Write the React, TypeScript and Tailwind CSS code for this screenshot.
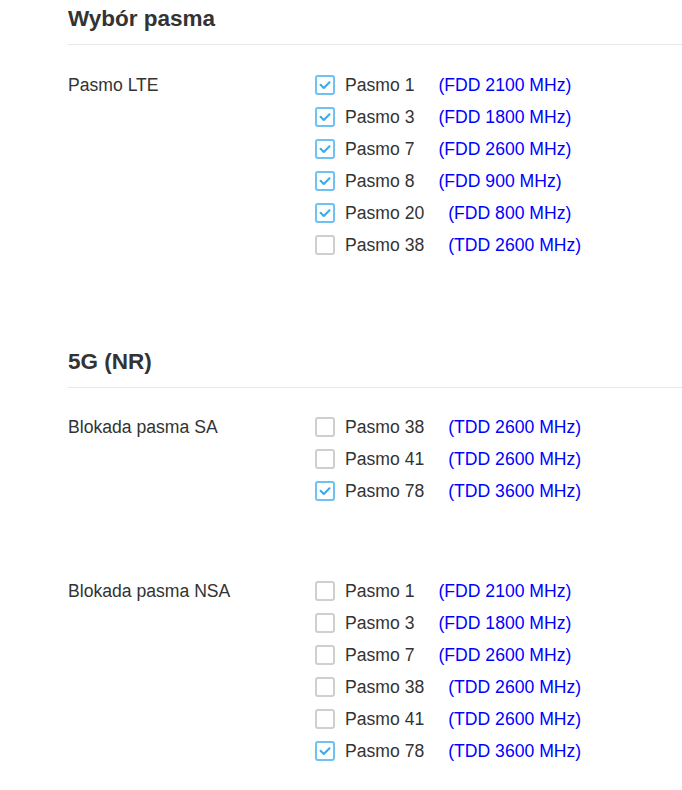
type Band = { name: string; freq: string; on: boolean };

const lte: Band[] = [
  { name: 'Pasmo 1', freq: '(FDD 2100 MHz)', on: true },
  { name: 'Pasmo 3', freq: '(FDD 1800 MHz)', on: true },
  { name: 'Pasmo 7', freq: '(FDD 2600 MHz)', on: true },
  { name: 'Pasmo 8', freq: '(FDD 900 MHz)', on: true },
  { name: 'Pasmo 20', freq: '(FDD 800 MHz)', on: true },
  { name: 'Pasmo 38', freq: '(TDD 2600 MHz)', on: false },
];

const sa: Band[] = [
  { name: 'Pasmo 38', freq: '(TDD 2600 MHz)', on: false },
  { name: 'Pasmo 41', freq: '(TDD 2600 MHz)', on: false },
  { name: 'Pasmo 78', freq: '(TDD 3600 MHz)', on: true },
];

const nsa: Band[] = [
  { name: 'Pasmo 1', freq: '(FDD 2100 MHz)', on: false },
  { name: 'Pasmo 3', freq: '(FDD 1800 MHz)', on: false },
  { name: 'Pasmo 7', freq: '(FDD 2600 MHz)', on: false },
  { name: 'Pasmo 38', freq: '(TDD 2600 MHz)', on: false },
  { name: 'Pasmo 41', freq: '(TDD 2600 MHz)', on: false },
  { name: 'Pasmo 78', freq: '(TDD 3600 MHz)', on: true },
];

function Check({ on }: { on: boolean }) {
  return (
    <span
      className={
        on
          ? 'flex h-5 w-5 shrink-0 items-center justify-center rounded-[3px] border-2 border-[#6cc2f2] bg-white'
          : 'flex h-5 w-5 shrink-0 items-center justify-center rounded-[3px] border-2 border-[#cfcfcf] bg-white'
      }
    >
      {on && (
        <svg width="14" height="14" viewBox="0 0 14 14" fill="none">
          <polyline points="2.5,6.8 5.8,10 11.5,4.2" stroke="#3aa8ea" strokeWidth="2" strokeLinecap="round" strokeLinejoin="round" />
        </svg>
      )}
    </span>
  );
}

function BandGroup({ label, bands }: { label: string; bands: Band[] }) {
  return (
    <div className="flex">
      <div className="w-[247px] shrink-0 leading-[32px]">{label}</div>
      <div className="flex flex-col">
        {bands.map((b) => (
          <div key={b.name + b.freq} className="flex h-8 items-center">
            <Check on={b.on} />
            <span className="ml-[10px]">{b.name}</span>
            <span className="ml-[24px] text-[#0000ff]">{b.freq}</span>
          </div>
        ))}
      </div>
    </div>
  );
}

function Heading({ children }: { children: string }) {
  return (
    <div className="border-b border-[#e8e8e8] pt-[6px] pb-[12px] text-[22.5px] leading-[26px] font-bold text-[#333]">
      {children}
    </div>
  );
}

export default function App() {
  return (
    <div className="min-h-[790px] bg-white pl-[68px] text-[17.6px] text-[#333]" style={{ fontFamily: '"Liberation Sans", Arial, sans-serif' }}>
      {/* Wybór pasma */}
      <Heading>Wybór pasma</Heading>
      <div className="mt-[24px]">
        <BandGroup label="Pasmo LTE" bands={lte} />
      </div>

      {/* 5G */}
      <div className="mt-[82px]">
        <Heading>5G (NR)</Heading>
      </div>
      <div className="mt-[23px]">
        <BandGroup label="Blokada pasma SA" bands={sa} />
      </div>
      <div className="mt-[68px]">
        <BandGroup label="Blokada pasma NSA" bands={nsa} />
      </div>
    </div>
  );
}
